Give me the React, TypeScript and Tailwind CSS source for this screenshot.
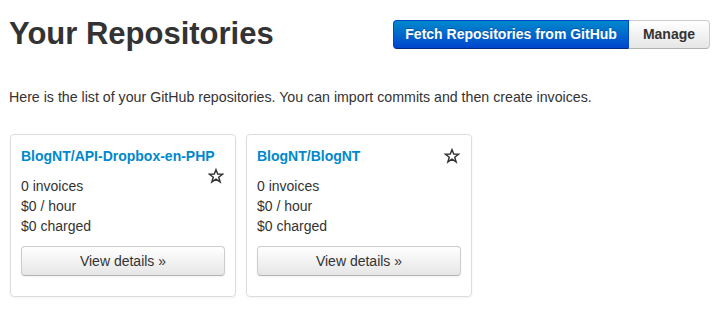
type Repo = {
  name: string;
  invoices: number;
  rate: string;
  charged: string;
};

const repos: Repo[] = [
  { name: "BlogNT/API-Dropbox-en-PHP", invoices: 0, rate: "$0", charged: "$0" },
  { name: "BlogNT/BlogNT", invoices: 0, rate: "$0", charged: "$0" },
];

function StarIcon() {
  return (
    <svg width="16" height="16" viewBox="0 0 24 24" fill="none" stroke="#333" strokeWidth="2.2" strokeLinejoin="miter">
      <polygon points="12,2.5 14.6,9.2 21.8,9.4 16.1,13.9 18.2,20.9 12,16.8 5.8,20.9 7.9,13.9 2.2,9.4 9.4,9.2" />
    </svg>
  );
}

function RepoCard({ repo }: { repo: Repo }) {
  return (
    <div className="w-[226px] rounded-[4px] border border-[#ddd] px-[10px] pt-[11px] pb-[20px] shadow-[0_1px_3px_rgba(0,0,0,0.055)]">
      <div className="mb-[10px] text-[14px] leading-5">
        <a href="#" className="font-bold text-[#0088cc]">
          {repo.name}
        </a>
        <span className="float-right flex h-5 w-[18px] items-center justify-center">
          <StarIcon />
        </span>
      </div>
      <div className="text-[14px] leading-5 text-[#333]">
        <div>{repo.invoices} invoices</div>
        <div>{repo.rate} / hour</div>
        <div>{repo.charged} charged</div>
      </div>
      <button className="mt-[10px] h-[30px] w-full rounded-[4px] border border-[#ccc] border-b-[#b3b3b3] bg-gradient-to-b from-white to-[#e6e6e6] text-[14px] text-[#333] shadow-[inset_0_1px_0_rgba(255,255,255,0.2),0_1px_2px_rgba(0,0,0,0.05)]">
        View details »
      </button>
    </div>
  );
}

export default function App() {
  return (
    <div className="min-h-[309px] bg-white pl-[9px] pr-[7px] text-[#333] [font-family:'Liberation_Sans',Arial,sans-serif]">
      <div className="flex items-center justify-between pt-[14px]">
        <h1 className="text-[31px] leading-10 font-bold text-[#333]">Your Repositories</h1>
        <div className="flex">
          <button className="h-[29px] rounded-l-[4px] border border-[#0044cc] border-b-[#002a80] bg-gradient-to-b from-[#0088cc] to-[#0044cc] px-[11px] text-[14px] font-bold text-white [text-shadow:0_-1px_0_rgba(0,0,0,0.25)]">
            Fetch Repositories from GitHub
          </button>
          <button className="h-[29px] rounded-r-[4px] border border-l-0 border-[#ccc] border-b-[#b3b3b3] bg-gradient-to-b from-white to-[#e6e6e6] px-[14px] text-[14px] font-bold text-[#333]">
            Manage
          </button>
        </div>
      </div>
      <p className="mt-[33px] text-[14.2px] leading-5">
        Here is the list of your GitHub repositories. You can import commits and then create invoices.
      </p>
      <div className="mt-[27px] ml-[1px] flex gap-[10px]">
        {repos.map((repo) => (
          <RepoCard key={repo.name} repo={repo} />
        ))}
      </div>
    </div>
  );
}
